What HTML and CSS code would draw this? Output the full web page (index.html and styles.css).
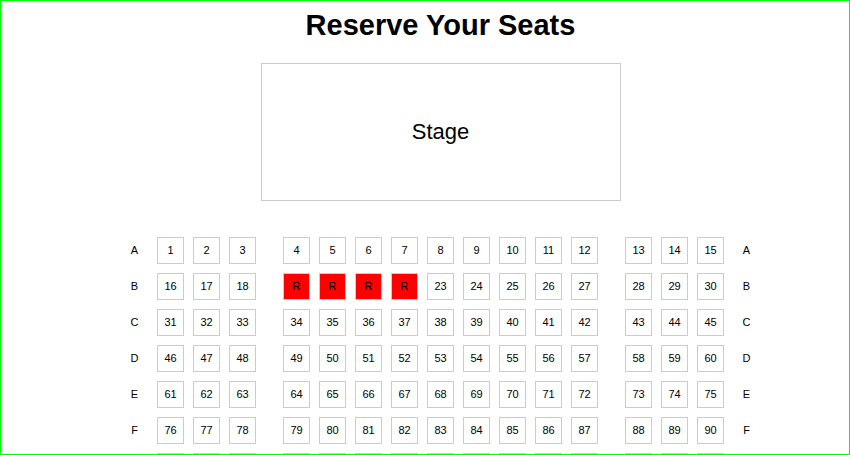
FILE: index.html
```html
<!DOCTYPE html>
<html lang="en">
<head>
<meta charset="utf-8">
<title>Reserve Your Seats</title>
<link rel="stylesheet" href="styles.css">
</head>
<body>
<div class="page">
  <h1 class="title">Reserve Your Seats</h1>
  <div class="stage">Stage</div>
  <div class="seatmap">
    <div class="row"><span class="label">A</span><span class="seat">1</span><span class="seat">2</span><span class="seat">3</span><span class="aisle"></span><span class="seat">4</span><span class="seat">5</span><span class="seat">6</span><span class="seat">7</span><span class="seat">8</span><span class="seat">9</span><span class="seat">10</span><span class="seat">11</span><span class="seat">12</span><span class="aisle"></span><span class="seat">13</span><span class="seat">14</span><span class="seat">15</span><span class="label">A</span></div>
    <div class="row"><span class="label">B</span><span class="seat">16</span><span class="seat">17</span><span class="seat">18</span><span class="aisle"></span><span class="seat reserved">R</span><span class="seat reserved">R</span><span class="seat reserved">R</span><span class="seat reserved">R</span><span class="seat">23</span><span class="seat">24</span><span class="seat">25</span><span class="seat">26</span><span class="seat">27</span><span class="aisle"></span><span class="seat">28</span><span class="seat">29</span><span class="seat">30</span><span class="label">B</span></div>
    <div class="row"><span class="label">C</span><span class="seat">31</span><span class="seat">32</span><span class="seat">33</span><span class="aisle"></span><span class="seat">34</span><span class="seat">35</span><span class="seat">36</span><span class="seat">37</span><span class="seat">38</span><span class="seat">39</span><span class="seat">40</span><span class="seat">41</span><span class="seat">42</span><span class="aisle"></span><span class="seat">43</span><span class="seat">44</span><span class="seat">45</span><span class="label">C</span></div>
    <div class="row"><span class="label">D</span><span class="seat">46</span><span class="seat">47</span><span class="seat">48</span><span class="aisle"></span><span class="seat">49</span><span class="seat">50</span><span class="seat">51</span><span class="seat">52</span><span class="seat">53</span><span class="seat">54</span><span class="seat">55</span><span class="seat">56</span><span class="seat">57</span><span class="aisle"></span><span class="seat">58</span><span class="seat">59</span><span class="seat">60</span><span class="label">D</span></div>
    <div class="row"><span class="label">E</span><span class="seat">61</span><span class="seat">62</span><span class="seat">63</span><span class="aisle"></span><span class="seat">64</span><span class="seat">65</span><span class="seat">66</span><span class="seat">67</span><span class="seat">68</span><span class="seat">69</span><span class="seat">70</span><span class="seat">71</span><span class="seat">72</span><span class="aisle"></span><span class="seat">73</span><span class="seat">74</span><span class="seat">75</span><span class="label">E</span></div>
    <div class="row"><span class="label">F</span><span class="seat">76</span><span class="seat">77</span><span class="seat">78</span><span class="aisle"></span><span class="seat">79</span><span class="seat">80</span><span class="seat">81</span><span class="seat">82</span><span class="seat">83</span><span class="seat">84</span><span class="seat">85</span><span class="seat">86</span><span class="seat">87</span><span class="aisle"></span><span class="seat">88</span><span class="seat">89</span><span class="seat">90</span><span class="label">F</span></div>
    <div class="row"><span class="label">G</span><span class="seat">91</span><span class="seat">92</span><span class="seat">93</span><span class="aisle"></span><span class="seat">94</span><span class="seat">95</span><span class="seat">96</span><span class="seat">97</span><span class="seat">98</span><span class="seat">99</span><span class="seat">100</span><span class="seat">101</span><span class="seat">102</span><span class="aisle"></span><span class="seat">103</span><span class="seat">104</span><span class="seat">105</span><span class="label">G</span></div>
  </div>
</div>
<div class="frame"></div>
</body>
</html>
```

FILE: styles.css
```css
html {
  overflow: hidden;
}

body {
  margin: 0;
  background: #fff;
  color: #000;
  font-family: "Liberation Sans", Arial, sans-serif;
}

.page {
  width: 881px;
}

.title {
  margin: 9px 0 0;
  font-size: 29px;
  line-height: 32px;
  font-weight: bold;
  text-align: center;
}

.stage {
  width: 358px;
  height: 136px;
  margin: 22px auto 0;
  border: 1px solid #ccc;
  display: flex;
  align-items: center;
  justify-content: center;
  font-size: 22px;
}

.seatmap {
  margin-top: 36px;
  display: flex;
  flex-direction: column;
  align-items: center;
  gap: 9px;
}

.row {
  display: flex;
  align-items: center;
  gap: 9px;
}

.label {
  width: 27px;
  padding-bottom: 2px;
  text-align: center;
  font-size: 11px;
}

.seat {
  box-sizing: border-box;
  width: 27px;
  height: 27px;
  padding-bottom: 2px;
  border: 1px solid #ccc;
  display: flex;
  align-items: center;
  justify-content: center;
  font-size: 11px;
}

.seat.reserved {
  background: #f00;
}

.aisle {
  width: 9px;
}

.frame {
  position: fixed;
  top: 0;
  left: 0;
  width: 850px;
  height: 455px;
  box-sizing: border-box;
  border: 1px solid #0f0;
  pointer-events: none;
}
```
